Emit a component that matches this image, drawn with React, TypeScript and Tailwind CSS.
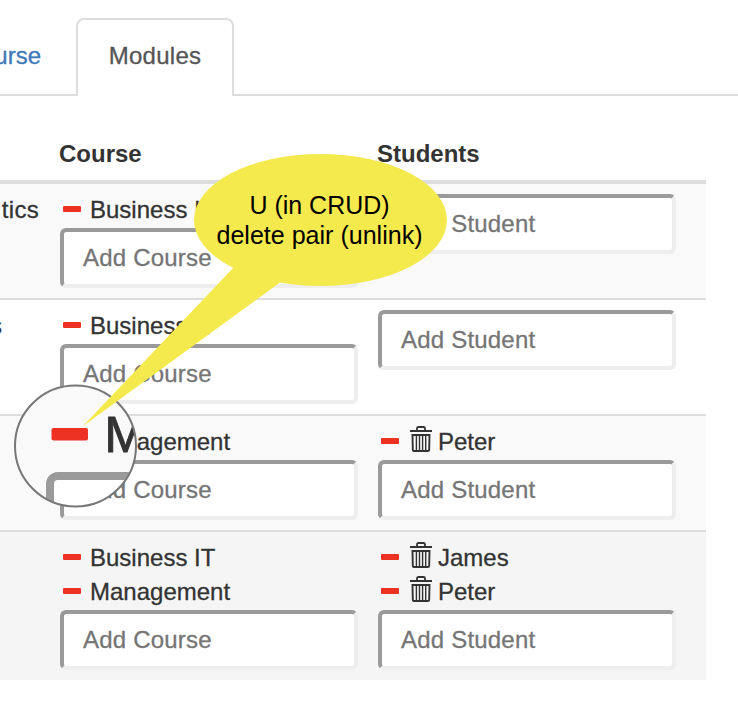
import React from "react";

const Bar = () => <span className="-mt-[2px] mr-[9px] ml-[3px] block h-[6px] w-[18px] shrink-0 rounded-[1px] bg-[#ed3224]" />;

const Trash = () => (
  <svg className="-mt-[7px] mr-[6px] ml-[2px] h-[26px] w-[22px] shrink-0" viewBox="0 0 22 26" fill="none" stroke="#333">
    <path d="M0 5H22" strokeWidth="2" />
    <path d="M7 4.5V2.5Q7 1 8.5 1H13.5Q15 1 15 2.5V4.5" strokeWidth="1.8" />
    <path d="M2.5 9H19.5L19.2 23.4Q19.2 25 17.6 25H4.4Q2.8 25 2.8 23.4Z" strokeWidth="1.9" />
    <path d="M6.4 9V25M9.5 9V25M12.6 9V25M15.7 9V25" strokeWidth="1.4" />
  </svg>
);

const Item = ({ name, trash }: { name: string; trash?: boolean }) => (
  <div className="-mt-px mb-px flex h-[34px] items-center whitespace-nowrap">
    <Bar />
    {trash && <Trash />}
    <span className="-mt-px">{name}</span>
  </div>
);

const Field = ({ label }: { label: string }) => (
  <div className="flex h-[60px] w-[298px] items-center rounded-[6px] border-4 border-t-[#9a9a9a] border-r-[#eee] border-b-[#eee] border-l-[#9a9a9a] bg-white pl-[19px] tracking-[0.2px] text-[#757575]">
    <span className="-mt-px">{label}</span>
  </div>
);

type RowData = { title: string; courses: string[]; students: string[]; bg: string };

const rows: RowData[] = [
  { title: "tics", courses: ["Business IT"], students: [], bg: "bg-[#f9f9f9]" },
  { title: "s", courses: ["Business IT"], students: [], bg: "bg-white" },
  { title: "", courses: ["Management"], students: ["Peter"], bg: "bg-[#f9f9f9]" },
  { title: "", courses: ["Business IT", "Management"], students: ["James", "Peter"], bg: "bg-[#f5f5f5]" },
];

const Row = ({ data, first }: { data: RowData; first: boolean }) => (
  <div className={`flex py-[10px] ${data.bg} ${first ? "" : "border-t-2 border-[#ddd]"}`}>
    <div className="-mt-px flex h-[34px] w-[60px] shrink-0 items-center justify-end">
      <span className={data.title === "s" ? "-mt-px mr-[58px]" : "-mt-px mr-[21px] tracking-[0.3px]"}>{data.title}</span>
    </div>
    <div className="w-[318px] shrink-0">
      {data.courses.map((c) => <Item key={c} name={c} />)}
      <Field label="Add Course" />
    </div>
    <div>
      {data.students.map((s) => <Item key={s} name={s} trash />)}
      <Field label="Add Student" />
    </div>
  </div>
);

export default function App() {
  return (
    <div className="relative h-[716px] w-[738px] overflow-hidden bg-white font-['Liberation_Sans',Arial,sans-serif] text-[24px] leading-[34px] text-[#333] [-webkit-text-stroke:0.3px]">
      <nav className="flex h-[96px] items-end">
        <div className="flex h-[78px] w-[76px] items-center justify-end border-b-2 border-[#ddd] pr-[35px] text-[#4078b8]">
          <span>Course</span>
        </div>
        <div className="flex h-[78px] w-[158px] items-center justify-center rounded-t-[8px] border-2 border-b-0 border-[#ddd] pb-1 tracking-[0.25px] text-[#555]">
          <span>Modules</span>
        </div>
        <div className="h-[78px] flex-1 border-b-2 border-[#ddd]" />
      </nav>
      <main className="w-[706px] pt-[30px]">
        <div className="flex h-[58px] border-b-4 border-[#ddd] pt-[11px] pl-[59px] font-bold [-webkit-text-stroke:0px]">
          <span className="w-[318px]">Course</span>
          <span>Students</span>
        </div>
        {rows.map((r, i) => <Row key={i} data={r} first={i === 0} />)}
      </main>
      <svg className="absolute inset-0 h-[716px] w-[738px]" viewBox="0 0 738 716">
        <defs>
          <clipPath id="lens"><circle cx="75.5" cy="446" r="60" /></clipPath>
        </defs>
        <g clipPath="url(#lens)">
          <rect x="10" y="380" width="130" height="130" fill="#f9f9f9" />
          <rect x="50" y="476" width="200" height="100" rx="8" fill="white" stroke="#9a9a9a" strokeWidth="8" />
          <text x="104.5" y="452" fontSize="50" fill="#333" stroke="#333" strokeWidth="1">M</text>
        </g>
        <rect x="51.5" y="428" width="36.5" height="12.5" rx="2" fill="#ed3224" />
        <circle cx="75.5" cy="446" r="60.5" fill="none" stroke="#777" strokeWidth="2" />
        <ellipse cx="320.5" cy="220" rx="126.5" ry="66" fill="#f5ea4d" />
        <path d="M82.5 426.5L235 266L282 281Z" fill="#f5ea4d" />
        <g className="[-webkit-text-stroke:0px]" fill="#000" fontSize="25" textAnchor="middle">
          <text x="319.5" y="214" textLength="140" lengthAdjust="spacingAndGlyphs">U (in CRUD)</text>
          <text x="319.5" y="244" textLength="206" lengthAdjust="spacingAndGlyphs">delete pair (unlink)</text>
        </g>
      </svg>
    </div>
  );
}
